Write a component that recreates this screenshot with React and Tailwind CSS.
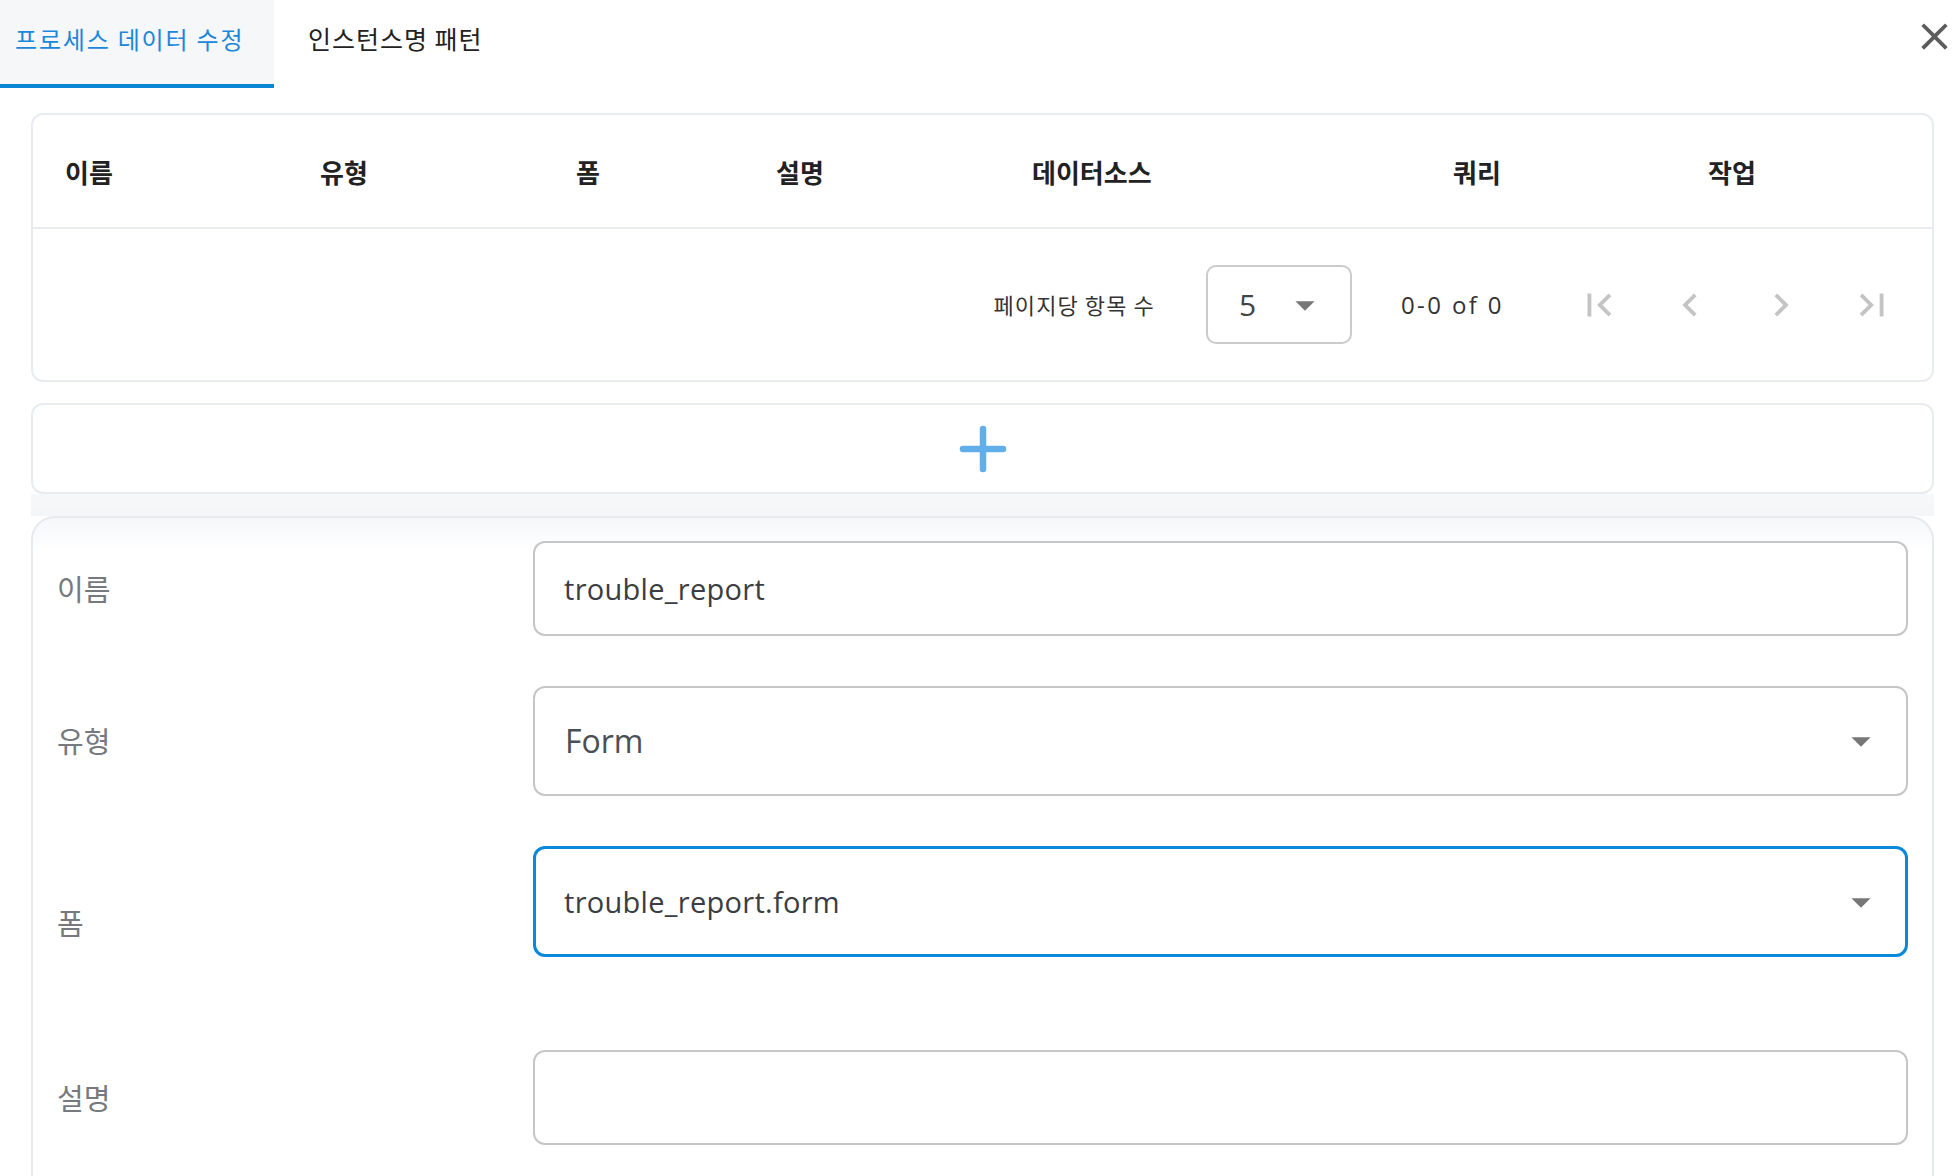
import React from 'react';

const MDI = {
    close: 'M19,6.41L17.59,5L12,10.59L6.41,5L5,6.41L10.59,12L5,17.59L6.41,19L12,13.41L17.59,19L19,17.59L13.41,12L19,6.41Z',
    menuDown: 'M7,10L12,15L17,10H7Z',
    pageFirst: 'M18.41,16.59L13.82,12L18.41,7.41L17,6L11,12L17,18L18.41,16.59M6,6H8V18H6V6Z',
    chevronLeft: 'M15.41,16.58L10.83,12L15.41,7.41L14,6L8,12L14,18L15.41,16.58Z',
    chevronRight: 'M8.59,16.58L13.17,12L8.59,7.41L10,6L16,12L10,18L8.59,16.58Z',
    pageLast: 'M5.59,7.41L10.18,12L5.59,16.59L7,18L13,12L7,6L5.59,7.41M16,6H18V18H16V6Z',
};

const Icon = ({ d, className }) => (
    <svg viewBox="0 0 24 24" className={className}>
        <path d={d} fill="currentColor" />
    </svg>
);

const columns = ['이름', '유형', '폼', '설명', '데이터소스', '쿼리', '작업'];

const Label = ({ children, className = '' }) => (
    <div className={`w-[476px] shrink-0 font-['Noto_Sans_CJK_KR',sans-serif] text-[29px] text-[#76797e] ${className}`}>{children}</div>
);

export default function App() {
    return (
        <div className="h-[1176px] w-[1954px] overflow-hidden bg-white font-['Noto_Sans_CJK_KR',sans-serif]">
            {/* tabs */}
            <div className="flex h-[88px] items-start">
                <div className="flex h-[88px] w-[274px] items-center border-b-4 border-[#0a86d6] bg-[#f5f7f9] pb-[6px] pl-[15px] text-[24px] tracking-[0.075em] text-[#1a87d8]">
                    프로세스 데이터 수정
                </div>
                <div className="flex h-[84px] items-center pb-[6px] pl-[34px] text-[25px] tracking-[0.04em] text-[#222]">
                    인스턴스명 패턴
                </div>
                <button className="ml-auto mr-[-3px] mt-[14px] text-[#5c5c5c]">
                    <Icon d={MDI.close} className="size-[45px]" />
                </button>
            </div>

            <div className="pl-[31px] pr-[20px]">
                {/* table */}
                <div className="mt-[25px] rounded-[12px] border-2 border-[#e8ecf0]">
                    <div className="grid h-[114px] grid-cols-[255px_256px_200px_256px_421px_255px_1fr] items-center border-b-2 border-[#e8ecf0] pl-[32px] text-[26px] font-bold text-[#222]">
                        {columns.map((c) => (
                            <div key={c}>{c}</div>
                        ))}
                    </div>
                    <div className="flex h-[151px] items-center justify-end pr-[37px] text-[#333]">
                        <span className="text-[22px] tracking-[0.05em]">페이지당 항목 수</span>
                        <div className="ml-[51px] flex h-[79px] w-[146px] items-center justify-between rounded-[10px] border-2 border-[#cbcbcb] pl-[31px] pr-[22px]">
                            <span className="font-['Open_Sans',sans-serif] text-[30px] text-[#444]">5</span>
                            <Icon d={MDI.menuDown} className="size-[46px] text-[#777]" />
                        </div>
                        <span className="ml-[49px] font-['Open_Sans',sans-serif] text-[24px] tracking-[0.1em] text-[#333]">0-0 of 0</span>
                        <div className="ml-[72px] flex gap-[45px] text-[#c4c4c4]">
                            <Icon d={MDI.pageFirst} className="size-[46px]" />
                            <Icon d={MDI.chevronLeft} className="size-[46px]" />
                            <Icon d={MDI.chevronRight} className="size-[46px]" />
                            <Icon d={MDI.pageLast} className="size-[46px]" />
                        </div>
                    </div>
                </div>

                {/* add */}
                <div className="mt-[21px] flex h-[91px] items-center justify-center rounded-[12px] border-2 border-[#e8ecf0]">
                    <svg viewBox="0 0 48 48" className="size-[48px]">
                        <path d="M24 4v40M4 24h40" stroke="#62aee8" strokeWidth="6.5" strokeLinecap="round" />
                    </svg>
                </div>

                <div className="h-[22px] bg-[linear-gradient(to_bottom,#f7f8fa,#f3f5f7)]" />

                {/* form */}
                <div className="h-[700px] rounded-t-[24px] border-2 border-[#e6eaee] bg-[linear-gradient(to_bottom,#f5f7f9,#ffffff_34px)] pl-[24px] pr-[24px] pt-[23px] font-['Open_Sans','Noto_Sans_CJK_KR',sans-serif]">
                    <div className="flex items-center">
                        <Label>이름</Label>
                        <div className="flex h-[95px] flex-1 items-center rounded-[12px] border-2 border-[#c6c6c6] bg-white pl-[29px] text-[29px] tracking-[0.01em] text-[#3a3d42]">
                            trouble_report
                        </div>
                    </div>

                    <div className="mt-[50px] flex items-center">
                        <Label>유형</Label>
                        <div className="flex h-[110px] flex-1 items-center justify-between rounded-[12px] border-2 border-[#c6c6c6] bg-white pl-[30px] pr-[22px] text-[32px] text-[#4a4f55]">
                            <span>Form</span>
                            <Icon d={MDI.menuDown} className="size-[46px] text-[#777]" />
                        </div>
                    </div>

                    <div className="mt-[50px] flex items-center">
                        <Label className="mt-[43px]">폼</Label>
                        <div className="flex h-[111px] flex-1 items-center justify-between rounded-[12px] border-[3px] border-[#0a88dc] bg-white pl-[28px] pr-[21px] text-[29px] tracking-[0.01em] text-[#3a3d42]">
                            <span>trouble_report.form</span>
                            <Icon d={MDI.menuDown} className="size-[46px] text-[#777]" />
                        </div>
                    </div>

                    <div className="mt-[93px] flex items-center">
                        <Label>설명</Label>
                        <div className="h-[95px] flex-1 rounded-[12px] border-2 border-[#c6c6c6] bg-white" />
                    </div>
                </div>
            </div>
        </div>
    );
}
